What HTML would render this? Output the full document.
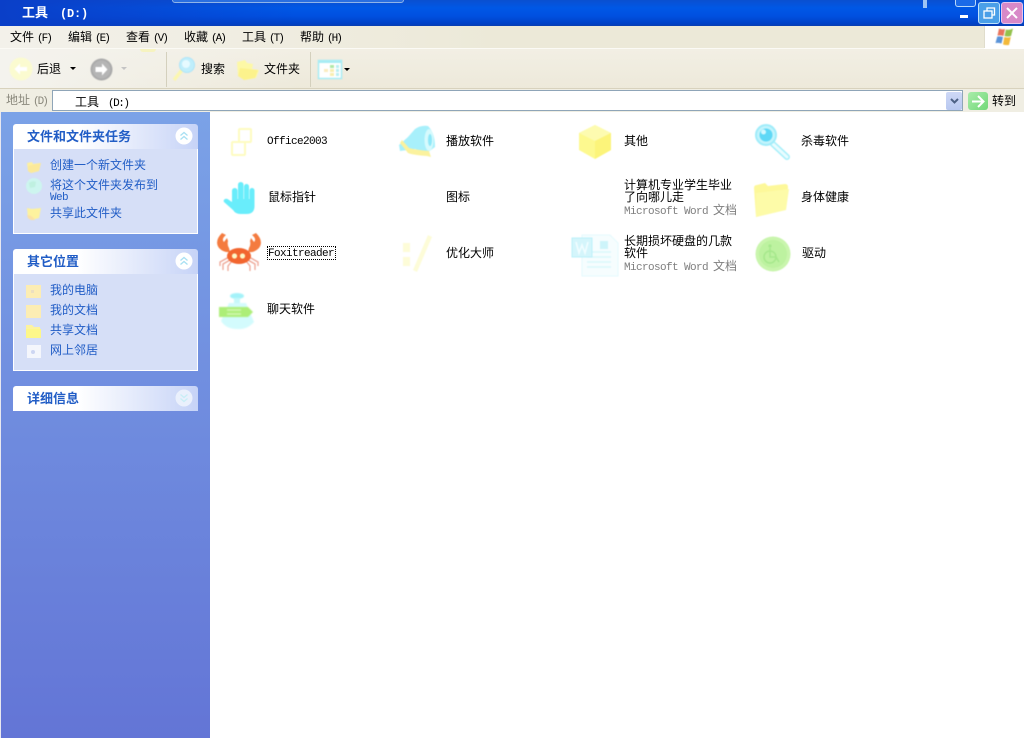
<!DOCTYPE html>
<html lang="zh">
<head>
<meta charset="utf-8">
<title>工具 (D:)</title>
<style>
html,body{margin:0;padding:0;width:1024px;height:738px;overflow:hidden;background:#fff}
body{position:relative;font:12px/12px "WenQuanYi Zen Hei","Noto Sans CJK SC",sans-serif;color:#000}
.a{position:absolute;white-space:nowrap}
.m{font-family:"Liberation Mono",monospace;font-size:11px;letter-spacing:-.6px}
.k{font-family:"Liberation Mono",monospace;font-size:11px;letter-spacing:-2px;margin-left:3px}
.b{color:#215dc6}
.g{color:#7f7f7f}
.t{color:#215dc6;font-weight:bold;font-size:13px;line-height:13px}
svg{position:absolute;overflow:visible}
svg.f{filter:blur(.5px)}
</style>
</head>
<body>
<!-- title bar -->
<div class="a" style="left:0;top:0;width:1024px;height:26px;background:linear-gradient(#0a4fd0 0,#0058e6 8px,#0050e0 16px,#0040c4 24px,#0a3fae 26px)"></div>
<div class="a" style="left:0;top:0;width:300px;height:26px;background:linear-gradient(90deg,#0a3fc8,rgba(0,80,224,0))"></div>
<div class="a" style="left:172px;top:-3px;width:230px;height:4px;background:#2a6fe0;border:1px solid #8fb4e8;border-radius:3px"></div>
<div class="a" style="left:22px;top:5px;color:#fff;font-size:13px;line-height:14px;font-weight:bold">工具<span style="font-family:'Liberation Mono',monospace;font-size:12px;letter-spacing:-.2px;margin-left:12px">(D:)</span></div>
<div class="a" style="left:923px;top:0;width:4px;height:8px;background:#9cc4f4"></div>
<div class="a" style="left:955px;top:0;width:19px;height:6px;border:1px solid #b8d8fa;border-top:0;border-radius:0 0 3px 3px;background:#1b6ae8"></div>
<div class="a" style="left:960px;top:15px;width:8px;height:3px;background:#fff"></div>
<div class="a" style="left:978px;top:2px;width:20px;height:20px;background:#4a9fe8;border:1px solid #bfe2fb;border-radius:3px"></div>
<svg style="left:978px;top:2px" width="22" height="22" fill="none" stroke="#fff" stroke-width="1.3"><rect x="6" y="9" width="8" height="7"/><path d="M9 9V6h7.500v7H14"/></svg>
<div class="a" style="left:1001px;top:2px;width:20px;height:20px;background:#d889c8;border:1px solid #e6c4ee;border-radius:3px"></div>
<svg style="left:1001px;top:2px" width="22" height="22" fill="none" stroke="#fff" stroke-width="2"><path d="M6 6l10 10M16 6L6 16"/></svg>

<!-- menu -->
<div class="a" style="left:0;top:26px;width:984px;height:22px;background:#ece9d8"></div>
<div class="a" style="left:0;top:26px;width:500px;height:22px;background:linear-gradient(90deg,#f3f1ea,#ece9d8)"></div>
<div class="a" style="left:984px;top:26px;width:40px;height:22px;background:#fff;border-left:1px solid #e0ddcc;box-sizing:border-box"></div>
<svg class="f" style="left:995px;top:27px" width="20" height="20"><path d="M4 1.500Q7 3 10 2L8.500 9Q5.500 8 2.500 8.500Z" fill="#e8745c"/><path d="M11 2.500Q14 3.500 18 1.500L16 9Q13 10 9.500 9Z" fill="#93c14b"/><path d="M2.300 9.500Q5 9 8 10L6.500 16.500Q3.500 15.500 .5 16Z" fill="#5a93d8"/><path d="M9.300 10Q13 11 15.800 10L14 18Q11 18.500 8 17.500Z" fill="#f3b93a"/></svg>
<div class="a" style="left:10px;top:31px">文件<span class="k">(F)</span></div>
<div class="a" style="left:68px;top:31px">编辑<span class="k">(E)</span></div>
<div class="a" style="left:126px;top:31px">查看<span class="k">(V)</span></div>
<div class="a" style="left:184px;top:31px">收藏<span class="k">(A)</span></div>
<div class="a" style="left:242px;top:31px">工具<span class="k">(T)</span></div>
<div class="a" style="left:300px;top:31px">帮助<span class="k">(H)</span></div>
<div class="a" style="left:0;top:48px;width:984px;height:1px;background:#fbfaf5"></div>

<!-- toolbar -->
<div class="a" style="left:0;top:49px;width:1024px;height:40px;background:linear-gradient(#f2efe4,#ede9da)"></div>
<div class="a" style="left:0;top:49px;width:300px;height:40px;background:linear-gradient(90deg,#f4f3ee,rgba(244,243,238,0))"></div>
<div class="a" style="left:0;top:88px;width:1024px;height:1px;background:#d8d2bd"></div>
<div class="a" style="left:140px;top:49px;width:16px;height:3px;background:#f6f3c0;border-radius:0 0 8px 8px"></div>
<svg class="f" style="left:9px;top:57px" width="24" height="24"><circle cx="12" cy="12" r="11.500" fill="#fbfbd0"/><path d="M5.500 12l5.500-5.500v3.500h7v4h-7v3.500z" fill="#fff"/></svg>
<div class="a" style="left:37px;top:63px">后退</div>
<svg style="left:70px;top:67px" width="6" height="3"><path d="M0 0h6L3 3z" fill="#000"/></svg>
<svg class="f" style="left:90px;top:58px" width="23" height="23"><circle cx="11.500" cy="11.500" r="11" fill="#aaa"/><circle cx="11.500" cy="11.500" r="9" fill="#b5b5b5"/><path d="M17.500 11.500l-5.500-6v3.500H5.500v5H12v3.500z" fill="#fff"/></svg>
<svg style="left:121px;top:67px" width="6" height="3"><path d="M0 0h6L3 3z" fill="#c4c4c4"/></svg>
<div class="a" style="left:166px;top:52px;width:1px;height:35px;background:#d4d0bd"></div>
<svg class="f" style="left:172px;top:56px" width="24" height="26"><path d="M2 24L10 14" stroke="#fbf6b0" stroke-width="3.500"/><circle cx="15" cy="9" r="7.500" fill="#bfeefb" stroke="#aee4f8"/><circle cx="14" cy="8" r="4" fill="#e6faff"/></svg>
<div class="a" style="left:201px;top:63px">搜索</div>
<svg class="f" style="left:236px;top:58px" width="24" height="23"><path d="M1 4L9 2l2 3 6 1-1 5 7 1-3 8-11 2-7-4z" fill="#fdf8a6"/><path d="M4 10l18 2-3 8-11 2-6-4z" fill="#fcf28c"/></svg>
<div class="a" style="left:264px;top:63px">文件夹</div>
<div class="a" style="left:310px;top:52px;width:1px;height:35px;background:#d4d0bd"></div>
<svg class="f" style="left:318px;top:60px" width="24" height="19"><rect x=".5" y=".5" width="23" height="18" fill="#fff" stroke="#a8ecf4" stroke-width="1.500"/><rect x="0" y="0" width="24" height="3" fill="#a8ecf4"/><rect x="12" y="5" width="4" height="3" fill="#b0e8a8"/><rect x="18" y="5" width="3" height="3" fill="#b8eef2"/><rect x="6" y="9" width="4" height="3" fill="#fbecc0"/><rect x="12" y="9" width="4" height="3" fill="#f8eeb0"/><rect x="18" y="9" width="3" height="3" fill="#b8eef2"/><rect x="12" y="13" width="4" height="3" fill="#f8eeb0"/><rect x="18" y="13" width="3" height="3" fill="#b8eef2"/></svg>
<svg style="left:344px;top:68px" width="6" height="3"><path d="M0 0h6L3 3z" fill="#000"/></svg>

<!-- address bar -->
<div class="a" style="left:0;top:89px;width:1024px;height:23px;background:#f0eee3"></div>
<div class="a" style="left:6px;top:94px;color:#8a887c">地址<span class="k">(D)</span></div>
<div class="a" style="left:52px;top:90px;width:911px;height:21px;background:#fff;border:1px solid #8fa5b8;box-sizing:border-box"></div>
<div class="a" style="left:75px;top:96px">工具<span class="m" style="margin-left:9px;letter-spacing:-1.5px">(D:)</span></div>
<div class="a" style="left:946px;top:92px;width:16px;height:18px;background:linear-gradient(#ced8f6,#b8c8f0);border-radius:2px"></div>
<svg style="left:950px;top:98px" width="9" height="7" fill="none" stroke="#4d6185" stroke-width="2"><path d="M1 1l3.500 3.500L8 1"/></svg>
<div class="a" style="left:968px;top:92px;width:20px;height:18px;background:linear-gradient(135deg,#a8ecaa,#72d878);border-radius:3px"></div>
<svg style="left:970px;top:94px" width="16" height="15" fill="none" stroke="#fff" stroke-width="2"><path d="M2 7.500h11M8 2l5.500 5.500L8 13"/></svg>
<div class="a" style="left:992px;top:95px">转到</div>

<!-- sidebar -->
<div class="a" style="left:1px;top:112px;width:209px;height:626px;background:linear-gradient(#7ba2e7,#6375d6)"></div>
<div class="a" style="left:0;top:112px;width:1px;height:626px;background:#e8e8f0"></div>

<!-- panel 1 -->
<div class="a" style="left:13px;top:124px;width:185px;height:25px;background:linear-gradient(90deg,#fff 35%,#c6d3f7);border-radius:3px 3px 0 0"></div>
<div class="a" style="left:13px;top:149px;width:185px;height:85px;background:#d6dff7;border:1px solid #fff;border-top:0;box-sizing:border-box"></div>
<div class="a t" style="left:27px;top:129px">文件和文件夹任务</div>
<svg style="left:175px;top:127px" width="18" height="18" fill="none"><circle cx="9" cy="9" r="8.500" fill="#fff"/><path d="M5.500 8.500L9 5.500l3.500 3M5.500 12.500L9 9.500l3.500 3" stroke="#a8e0f2" stroke-width="1.300"/></svg>
<svg class="f" style="left:26px;top:158px" width="16" height="16"><path d="M1 5l5-1 1 2 7-1-1 8-8 2-3-2z" fill="#fdf0a0"/><path d="M2 8l13-3-2 8-8 2-3-2z" fill="#fbe99a"/></svg>
<div class="a b" style="left:50px;top:159px">创建一个新文件夹</div>
<svg class="f" style="left:26px;top:178px" width="16" height="16"><circle cx="8" cy="8" r="8" fill="#cdf5ef"/><path d="M3 5q4-3 7-1l-1 5-5 1z" fill="#bff0e0"/></svg>
<div class="a b" style="left:50px;top:179px">将这个文件夹发布到</div>
<div class="a b m" style="left:50px;top:192px">Web</div>
<svg class="f" style="left:26px;top:206px" width="16" height="15"><path d="M1 2l5 1 9-1-2 10-8 2-3-2z" fill="#fdf29e"/><path d="M1 9q5 0 8 5l-4 0-3-2z" fill="#fbe1a5"/></svg>
<div class="a b" style="left:50px;top:207px">共享此文件夹</div>

<!-- panel 2 -->
<div class="a" style="left:13px;top:249px;width:185px;height:25px;background:linear-gradient(90deg,#fff 35%,#c6d3f7);border-radius:3px 3px 0 0"></div>
<div class="a" style="left:13px;top:274px;width:185px;height:97px;background:#d6dff7;border:1px solid #fff;border-top:0;box-sizing:border-box"></div>
<div class="a t" style="left:27px;top:254px">其它位置</div>
<svg style="left:175px;top:252px" width="18" height="18" fill="none"><circle cx="9" cy="9" r="8.500" fill="#fff"/><path d="M5.500 8.500L9 5.500l3.500 3M5.500 12.500L9 9.500l3.500 3" stroke="#a8e0f2" stroke-width="1.300"/></svg>
<div class="a" style="left:26px;top:285px;width:15px;height:13px;background:#fcedb4"></div>
<div class="a" style="left:31px;top:290px;width:3px;height:3px;background:#ecdfc0"></div>
<div class="a b" style="left:50px;top:284px">我的电脑</div>
<div class="a" style="left:26px;top:305px;width:15px;height:13px;background:#fcedb4"></div>
<div class="a b" style="left:50px;top:304px">我的文档</div>
<svg style="left:26px;top:325px" width="15" height="13"><path d="M0 0h6l2 2h6v11H0z" fill="#fdf3a0"/><path d="M0 4h15v9H0z" fill="#fdf78a"/></svg>
<div class="a b" style="left:50px;top:324px">共享文档</div>
<div class="a" style="left:27px;top:345px;width:14px;height:13px;background:#f4f6fc"></div>
<div class="a" style="left:31px;top:350px;width:4px;height:4px;background:#cdd6f2;border-radius:50%"></div>
<div class="a b" style="left:50px;top:344px">网上邻居</div>

<!-- panel 3 -->
<div class="a" style="left:13px;top:386px;width:185px;height:25px;background:linear-gradient(90deg,#fff 35%,#c6d3f7);border-radius:3px 3px 0 0"></div>
<div class="a t" style="left:27px;top:391px">详细信息</div>
<svg style="left:175px;top:389px" width="18" height="18" fill="none"><circle cx="9" cy="9" r="8.500" fill="#eaf0fc"/><path d="M5.500 5.500L9 8.500l3.500-3M5.500 9.500L9 12.500l3.500-3" stroke="#c8eef6" stroke-width="1.300"/></svg>

<!-- file icons -->
<svg class="f" style="left:230px;top:127px" width="26" height="32" fill="#fff" stroke="#fdfcc0" stroke-width="2"><rect x="9" y="2" width="12" height="13" rx="1"/><rect x="2" y="15" width="13" height="13" rx="1"/></svg>
<div class="a m" style="left:267px;top:136px">Office2003</div>

<svg class="f" style="left:397px;top:125px" width="42" height="36"><path d="M18 4Q24 0 31 1q7 7 7 21l-8 6-12-4-15 2-1-6 9-8z" fill="#a8f0fb"/><ellipse cx="32" cy="15" rx="4.500" ry="11" fill="#d6fafd"/><ellipse cx="33" cy="15" rx="2" ry="6" fill="#8fe8f8"/><path d="M5 15l7 8q8 2 20 3l2 6-4-1q-14-1-19-3l-8-10z" fill="#fbf29e"/></svg>
<div class="a" style="left:446px;top:135px">播放软件</div>

<svg class="f" style="left:577px;top:124px" width="36" height="36"><path d="M18 1l16 8v17l-16 9L2 26V9z" fill="#fdf98f"/><path d="M18 1l16 8-16 8L2 9z" fill="#fdfbb0"/><path d="M18 17l16-8v17l-16 9z" fill="#fcf47a"/></svg>
<div class="a" style="left:624px;top:135px">其他</div>

<svg class="f" style="left:754px;top:123px" width="38" height="38"><path d="M19 21l14 13" stroke="#a7effa" stroke-width="6" stroke-linecap="round"/><path d="M19 21l14 13" stroke="#e8fcff" stroke-width="3" stroke-linecap="round"/><circle cx="12" cy="12" r="10" fill="#c3f4fc" stroke="#a0ecfa" stroke-width="2"/><circle cx="12" cy="12" r="6.500" fill="#5fd8f6"/><circle cx="9.500" cy="9" r="2.500" fill="#d4f8fe"/></svg>
<div class="a" style="left:801px;top:135px">杀毒软件</div>

<svg class="f" style="left:223px;top:181px" width="34" height="34" fill="#69edfb"><rect x="9" y="7" width="5.500" height="18" rx="2.700"/><rect x="15" y="1" width="5.500" height="22" rx="2.700"/><rect x="21" y="3" width="5" height="20" rx="2.500"/><rect x="26.500" y="7" width="5" height="18" rx="2.500"/><path d="M9 18h22.500v7q0 8-8 8h-6q-5 0-7.500-4L1 21q-1-2 1-3 2-.7 4 1l3 2z"/></svg>
<div class="a" style="left:268px;top:191px">鼠标指针</div>

<div class="a" style="left:446px;top:191px">图标</div>

<div class="a" style="left:624px;top:179px;line-height:12px">计算机专业学生毕业<br>了向哪儿走</div>
<div class="a g" style="left:624px;top:204px"><span class="m">Microsoft Word</span><span style="margin-left:5px">文档</span></div>

<svg class="f" style="left:753px;top:179px" width="38" height="38"><path d="M3 38L1 9q0-3 3-3l8-2 3 3 17-2q3 0 3 3l-2 22z" fill="#fdf89a"/><path d="M3 38L3 14l33-4-3 21z" fill="#fdfba8"/></svg>
<div class="a" style="left:801px;top:191px">身体健康</div>

<svg class="f" style="left:216px;top:233px" width="46" height="42"><path d="M6 0Q-2 8 3 15q5 5 11 4l-1-4q-2-3-1-7l-1-3-3 4q-3-3 2-7z" fill="#f47b3f"/><path d="M40 0q8 8 3 15-5 5-11 4l1-4q2-3 1-7l1-3 3 4q3-3-2-7z" fill="#f47b3f"/><g fill="none" stroke="#eda595" stroke-width="1.300"><path d="M13 24L4 29v4M14 27l-7 4v6M16 28l-4 5v5M33 24l9 5v4M32 27l7 4v6M30 28l4 5v5"/></g><path d="M12 18l-2-4 3 1zM34 18l2-4-3 1z" fill="#f47b3f"/><ellipse cx="23" cy="23" rx="12" ry="8" fill="#f2652f"/><circle cx="18.500" cy="23" r="2.600" fill="#fdf7c6"/><circle cx="26.500" cy="23" r="2.600" fill="#fdf7c6"/></svg>
<div class="a" style="left:267px;top:247px;width:67px;height:12px;border:1px dotted #000;box-sizing:content-box;margin:-1px 0 0 0"><span class="m" style="position:absolute;left:0;top:1px;line-height:12px">Foxitreader</span></div>

<svg class="f" style="left:400px;top:233px" width="36" height="42" fill="#fdfcd8"><rect x="3" y="10" width="7" height="9"/><rect x="3" y="24" width="7" height="9"/><path d="M28 2l4 2-15 35-4-2z"/></svg>
<div class="a" style="left:446px;top:247px">优化大师</div>

<svg class="f" style="left:571px;top:232px" width="50" height="46"><path d="M11 3h28l8 8v33H11z" fill="#f6fdfe" stroke="#e4fafd"/><path d="M16 20h24M16 25h24M16 30h24M16 35h24" stroke="#daf8fc" stroke-width="1.500"/><rect x="1" y="6" width="20" height="19" fill="#d4f5fb" stroke="#bcf0f9"/><path d="M5 10l3 11 3-8 3 8 3-11" fill="none" stroke="#f2fdff" stroke-width="1.600"/><rect x="29" y="9" width="8" height="8" fill="#cdf4fa"/></svg>
<div class="a" style="left:624px;top:235px;line-height:12px">长期损坏硬盘的几款<br>软件</div>
<div class="a g" style="left:624px;top:260px"><span class="m">Microsoft Word</span><span style="margin-left:5px">文档</span></div>

<svg class="f" style="left:754px;top:236px" width="38" height="36"><circle cx="19" cy="18" r="17.500" fill="#c9f5ad"/><circle cx="19" cy="18" r="14" fill="#bdf2a0"/><g fill="none" stroke="#a6e88c" stroke-width="1.500"><circle cx="16" cy="21" r="6"/><path d="M16 12v9h6l3 5"/></g><circle cx="16" cy="10" r="1.600" fill="#a6e88c"/></svg>
<div class="a" style="left:802px;top:247px">驱动</div>

<svg style="left:217px;top:290px;filter:blur(.8px)" width="42" height="42"><ellipse cx="20" cy="6" rx="7" ry="3" fill="#a4f2f9"/><rect x="17" y="8" width="6" height="5" fill="#c6f8fa"/><path d="M12 13h17l8 19q-7 8-17 7-11 0-16-8z" fill="#d3fbfd"/><path d="M2 17h29l5 5-5 5H2z" fill="#adee78"/><path d="M10 20h14M10 24h14" stroke="#d5f7b8" stroke-width="1.500"/></svg>
<div class="a" style="left:267px;top:303px">聊天软件</div>
</body>
</html>
